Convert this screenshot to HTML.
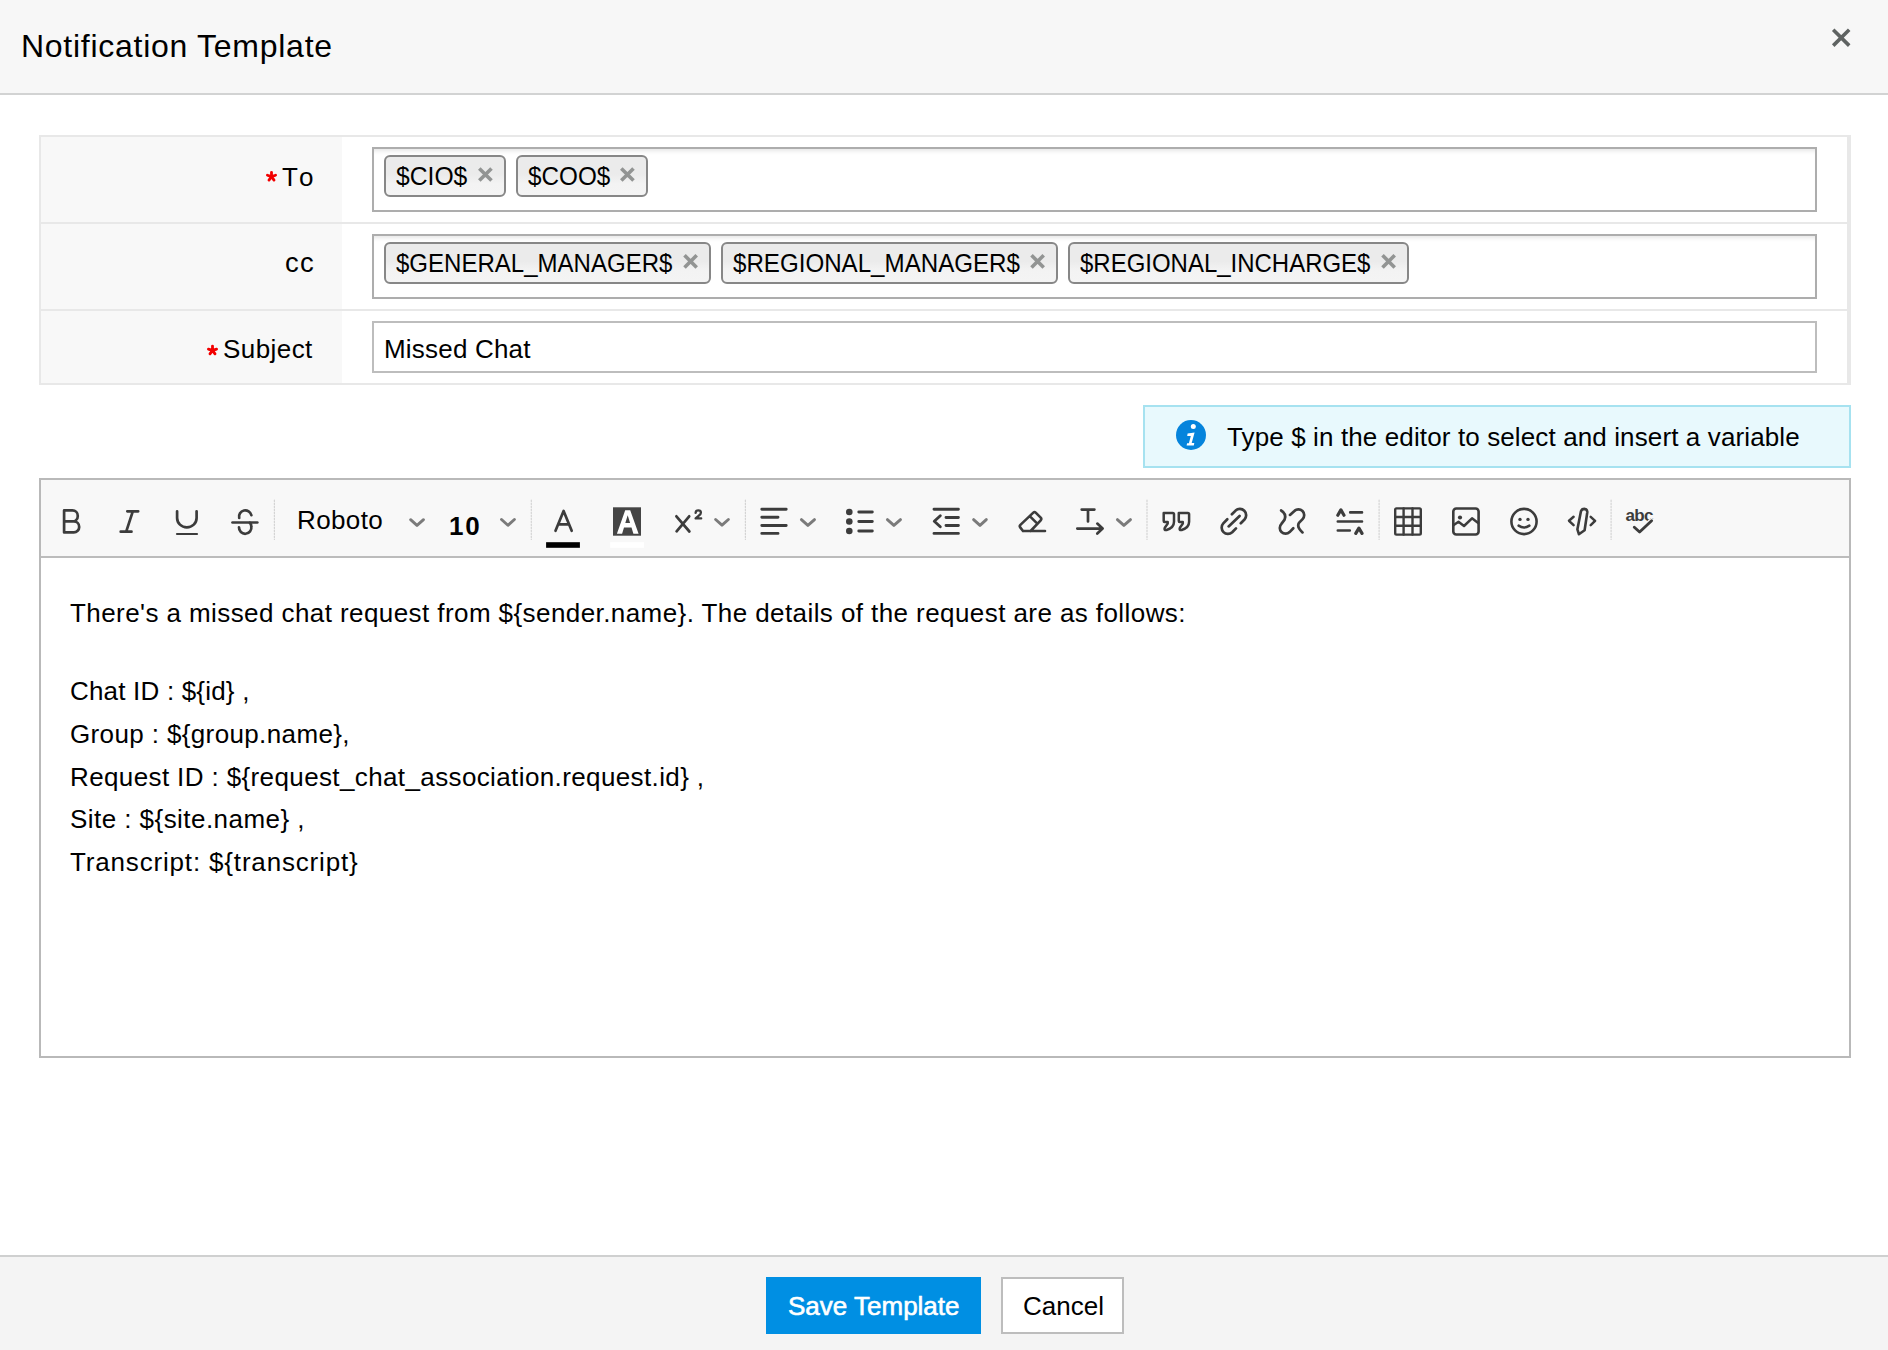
<!DOCTYPE html>
<html>
<head>
<meta charset="utf-8">
<style>
*{box-sizing:border-box;margin:0;padding:0}
html,body{width:1888px;height:1350px;overflow:hidden;background:#fff}
body{font-family:"Liberation Sans",sans-serif;color:#000;position:relative}
.abs{position:absolute}
.t{position:absolute;white-space:pre;line-height:1;font-size:26px}
#hdr{left:0;top:0;width:1888px;height:95px;background:#f7f7f7;border-bottom:2px solid #d2d3d3}
#tbl{left:39px;top:135px;width:1812px;height:250px;border:2px solid #e8e8e8;border-right-width:4px;background:#fff}
.lab{position:absolute;left:0;width:301px;background:#f8f8f8}
.div{position:absolute;left:0;right:0;height:2px;background:#e8e8e8}
.inp{position:absolute;left:331px;width:1445px;border:2px solid #adadad;background:#fff}
.inp.sh{box-shadow:inset 0 5px 4px -3px #e6e6e6}
.tag{position:absolute;height:42px;border:2px solid #878787;border-radius:6px;background:linear-gradient(#ebebeb,#ebebeb 45%,#f3f3f3 70%,#f4f4f4)}
.red{color:#e00}
#info{left:1143px;top:405px;width:708px;height:63px;border:2px solid #a6e2f0;background:#e8f9fd}
#ed{left:39px;top:478px;width:1812px;height:580px;border:2px solid #b9b9b9;background:#fff}
#tb{position:absolute;left:0;top:0;width:100%;height:78px;background:#f8f8f8;border-bottom:2px solid #bcbcbc}
#ftr{left:0;top:1255px;width:1888px;height:95px;background:#f4f4f4;border-top:2px solid #cfd0d0}
#save{left:766px;top:1277px;width:215px;height:57px;background:#008fe3}
#cancel{left:1001px;top:1277px;width:123px;height:57px;background:#fff;border:2px solid #bdbdbd}
.sep{position:absolute;top:500px;width:1px;height:40px;border-left:1px dotted #c8c8c8}
</style>
</head>
<body>
<div id="hdr" class="abs"></div>
<div class="t" id="x_title" style="letter-spacing:0.73px;left:21px;top:30px;font-size:32px">Notification Template</div>

<div id="tbl" class="abs">
  <div class="lab" style="top:0;height:85px"></div>
  <div class="div" style="top:85px"></div>
  <div class="lab" style="top:87px;height:85px"></div>
  <div class="div" style="top:172px"></div>
  <div class="lab" style="top:174px;height:72px"></div>
  <div class="inp sh" style="top:10px;height:65px"></div>
  <div class="inp sh" style="top:97px;height:65px"></div>
  <div class="inp" style="top:184px;height:52px;border-color:#bdbdbd"></div>
</div>

<div class="tag" style="left:384px;top:155px;width:122px"></div>
<div class="tag" style="left:516px;top:155px;width:132px"></div>
<div class="tag" style="left:384px;top:242px;width:327px"></div>
<div class="tag" style="left:721px;top:242px;width:337px"></div>
<div class="tag" style="left:1068px;top:242px;width:341px"></div>

<div id="info" class="abs"></div>
<div id="ed" class="abs"><div id="tb"></div></div>
<div id="ftr" class="abs"></div>
<div id="save" class="abs"></div>
<div id="cancel" class="abs"></div>

<div class="t" id="x_to" style="font-kerning:none;letter-spacing:1px;left:282px;top:164px">To</div>
<div class="t" id="x_cc" style="font-size:27.5px;letter-spacing:1.2px;left:285px;top:249px">cc</div>
<div class="t" id="x_subj" style="letter-spacing:0.43px;left:223px;top:336px">Subject</div>
<div class="t" id="x_t1" style="transform:scaleX(0.949);transform-origin:0 0;left:396px;top:163px">$CIO$</div>
<div class="t" id="x_t2" style="transform:scaleX(0.933);transform-origin:0 0;left:528px;top:163px">$COO$</div>
<div class="t" id="x_t3" style="transform:scaleX(0.924);transform-origin:0 0;left:396px;top:250px">$GENERAL_MANAGER$</div>
<div class="t" id="x_t4" style="transform:scaleX(0.928);transform-origin:0 0;left:733px;top:250px">$REGIONAL_MANAGER$</div>
<div class="t" id="x_t5" style="transform:scaleX(0.922);transform-origin:0 0;left:1080px;top:250px">$REGIONAL_INCHARGE$</div>
<div class="t" id="x_ms" style="letter-spacing:0.2px;left:384px;top:336px">Missed Chat</div>
<div class="t" id="x_info" style="letter-spacing:0.12px;left:1227px;top:424px">Type $ in the editor to select and insert a variable</div>
<div class="t" id="x_rob" style="letter-spacing:0.38px;left:297px;top:507px">Roboto</div>
<div class="t" id="x_10" style="letter-spacing:1.7px;left:449px;top:513px;font-weight:bold">10</div>
<div class="t" id="x_l1" style="letter-spacing:0.42px;left:70px;top:600px">There's a missed chat request from ${sender.name}. The details of the request are as follows:</div>
<div class="t" id="x_l2" style="letter-spacing:0.19px;left:70px;top:678px">Chat ID : ${id} ,</div>
<div class="t" id="x_l3" style="letter-spacing:0.37px;left:70px;top:721px">Group : ${group.name},</div>
<div class="t" id="x_l4" style="letter-spacing:0.38px;left:70px;top:764px">Request ID : ${request_chat_association.request.id} ,</div>
<div class="t" id="x_l5" style="letter-spacing:0.45px;left:70px;top:806px">Site : ${site.name} ,</div>
<div class="t" id="x_l6" style="letter-spacing:0.83px;left:70px;top:849px">Transcript: ${transcript}</div>
<div class="t" id="x_save" style="-webkit-text-stroke:0.6px #fff;left:788px;top:1293px;color:#fff">Save Template</div>
<div class="t" id="x_cancel" style="left:1023px;top:1293px">Cancel</div>

<svg id="ov" width="1888" height="1350" style="position:absolute;left:0;top:0">
<g fill="none" stroke-linecap="round" stroke-linejoin="round">
 <!-- close -->
 <path d="M1833.2,29.8 L1849.2,45.6 M1849.2,29.8 L1833.2,45.6" stroke="#5f6362" stroke-width="3.6" stroke-linecap="butt"/>
 <!-- tag x -->
 <g stroke="#929493" stroke-width="3.6" stroke-linecap="butt">
  <path d="M479.3,168.4 L491.5,180.6 M491.5,168.4 L479.3,180.6"/>
  <path d="M621.3,168.4 L633.5,180.6 M633.5,168.4 L621.3,180.6"/>
  <path d="M684.5,255.3 L696.7,267.5 M696.7,255.3 L684.5,267.5"/>
  <path d="M1031.5,255.3 L1043.7,267.5 M1043.7,255.3 L1031.5,267.5"/>
  <path d="M1382.5,255.3 L1394.7,267.5 M1394.7,255.3 L1382.5,267.5"/>
 </g>
 <g stroke="#3c3c3c" stroke-width="2.7">
  <!-- B -->
  <path d="M64.1,510.4 V532.4 H73.8 A5.4,5.5 0 0 0 73.8,521.4 H64.1 M64.1,510.4 H72.4 A5.4,5.5 0 0 1 72.4,521.4"/>
  <!-- I -->
  <path d="M127.3,511.3 H138.2 M120.7,531.7 H131.5 M132.8,511.3 L126.2,531.7"/>
  <!-- U -->
  <path d="M177.1,511.3 V518 A9.75,9.4 0 0 0 196.6,518 V511.3"/>
  <path d="M177,534 H197" stroke-width="2.2"/>
  <!-- S strike -->
  <path d="M239.2,518 A6.2,6.2 0 1 1 251.4,515.2"/>
  <path d="M232.5,522.5 H257.3"/>
  <path d="M239,527.3 A6.2,6.2 0 1 0 251.3,526.5 Q251.3,524.2 249.8,522.8"/>
  <!-- A font color -->
  <path d="M555.5,530.8 L563.6,511 L571.7,530.8 M559.3,524.4 H568"/>
  <!-- X2 -->
  <path d="M676.4,516.3 L689.4,531.5 M689.2,516.3 L676.6,531.3"/>
  <path d="M695.6,512.8 Q695.8,510.4 698.3,510.4 Q700.9,510.4 700.9,512.7 Q700.9,514.3 698.6,515.8 L695.6,518.4 H701.2" stroke-width="2.3"/>
  <!-- align -->
  <path d="M761.8,509.3 H786.2 M761.8,517.2 H778 M761.8,525.5 H786.2 M761.8,533.4 H778" stroke-width="2.9"/>
  <!-- list -->
  <path d="M858.8,512 H872.3 M858.8,521.5 H872.3 M858.8,531 H872.3" stroke-width="2.9"/>
  <!-- outdent -->
  <path d="M934,509.3 H958.4 M946,517.5 H958.4 M946,525.5 H958.4 M934,533.4 H958.4" stroke-width="2.9"/>
  <path d="M940.3,515.8 L934.3,521.3 L940.3,526.8" stroke-width="2.9"/>
  <!-- eraser -->
  <path d="M1023,531 L1020.2,527.4 Q1019.2,526.1 1020.4,524.9 L1033.3,512.6 Q1034.5,511.5 1035.7,512.6 L1040.7,517.7 Q1041.9,519 1040.7,520.3 L1030.6,531 M1023,531 H1045 M1030.5,516.8 L1037.3,523.6" stroke-width="2.6"/>
  <!-- T arrow -->
  <path d="M1081.7,509.6 H1094.4 M1088,509.6 V521.5 M1077.3,528.6 H1102.6 M1097.3,523.6 L1102.6,528.6 L1097.3,533.6" stroke-width="2.7"/>
  <!-- quote -->
  <path d="M1163.7,512.9 H1172.7 Q1174,512.9 1174,514.2 V521.8 Q1174,527.8 1166.6,530 Q1163.7,530.3 1164.8,527.8 L1167.7,523.6 V522 H1164.6 Q1163.7,522 1163.7,521 Z" stroke-width="2.5"/>
  <path d="M1178.8,512.9 H1187.8 Q1189.1,512.9 1189.1,514.2 V521.8 Q1189.1,527.8 1181.7,530 Q1178.8,530.3 1179.9,527.8 L1182.8,523.6 V522 H1179.7 Q1178.8,522 1178.8,521 Z" stroke-width="2.5"/>
  <!-- link -->
  <path d="M1231.9,514.3 L1235.6,510.6 A6.3,6.3 0 0 1 1244.5,519.5 L1240.8,523.2"/>
  <path d="M1227.3,519.3 L1223.3,523.4 A6.3,6.3 0 0 0 1232.2,532.3 L1236,528.4"/>
  <path d="M1228.6,526.4 L1239.6,515.9"/>
  <!-- unlink -->
  <path d="M1281.1,510.5 Q1286.8,513.8 1284.6,519.6 L1281.4,523.9 A5.8,5.8 0 0 0 1289.6,532.1 L1293.3,528.3"/>
  <path d="M1290,514.9 L1294.4,510.9 A5.8,5.8 0 0 1 1302.6,519.1 L1299.2,522.6 Q1296.2,527 1302.5,532.4"/>
  <!-- line height -->
  <path d="M1350.2,512.4 H1362 M1337.8,521.5 H1362 M1337.8,530.5 H1349.8" stroke-width="2.6"/><path d="M1337.8,515.2 L1340.9,509.9 L1344,515.2 M1355.8,533.4 L1358.9,528.1 L1362,533.4" stroke-width="3.2"/>
  <!-- table -->
  <rect x="1395.2" y="508.4" width="25.6" height="26.2" rx="1.3" stroke-width="2.4"/>
  <path d="M1403.6,508.4 V534.6 M1412.5,508.4 V534.6 M1395.2,517 H1420.8 M1395.2,525.8 H1420.8" stroke-width="2.4"/>
  <!-- image -->
  <rect x="1453.3" y="508.5" width="25.3" height="26" rx="3" stroke-width="2.6"/>
  <path d="M1453.8,525 L1458.5,521.8 L1464,526 L1472,518.3 L1478.2,523" stroke-width="2.5"/>
  <!-- smiley -->
  <circle cx="1524" cy="521.5" r="12.6" stroke-width="2.6"/>
  <path d="M1518.6,525.6 Q1524,529.3 1529.4,525.6" stroke-width="2.5"/>
  <!-- code -->
  <path d="M1573.6,516.8 L1569,520.8 L1573.6,525.2 M1590.7,516.8 L1595.1,520.8 L1590.7,525.2" stroke-width="2.5"/>
  <path d="M1578.9,534.2 L1577.4,529.3 L1580.9,511.4 Q1581.6,508.9 1584.3,508.9 Q1587.5,509.2 1587.3,512.2 L1584.6,530.2 Z" stroke-width="2.6"/>
 </g>
 <!-- chevrons -->
 <g fill="none" stroke="#7b7b7b" stroke-width="2.9" stroke-linecap="round" stroke-linejoin="round">
  <path d="M410.6,519.7 L417,525.4 L423.5,519.7"/>
  <path d="M501.5,519.5 L507.9,525.3 L514.4,519.5"/>
  <path d="M715.6,519.5 L722,525.2 L728.4,519.5"/>
  <path d="M801.4,519.6 L807.9,525.4 L814.5,519.6"/>
  <path d="M887.4,519.6 L893.9,525.4 L900.5,519.6"/>
  <path d="M973.6,519.6 L980,525.4 L986.3,519.6"/>
  <path d="M1117.4,519.6 L1123.9,525.4 L1130.5,519.6"/>
 </g>
 <!-- separators -->
 <g stroke="#d4d4d4" stroke-width="1.2" stroke-dasharray="1.5,1.5">
  <path d="M274.4,500 V539.5 M531.3,500 V539.5 M745.4,500 V539.5 M1147,500 V539.5 M1379.1,500 V539.5 M1611.1,500 V539.5"/>
 </g>
 <g fill="#3c3c3c" stroke="none">
  <circle cx="849.3" cy="512" r="3.3"/>
  <circle cx="849.3" cy="521.5" r="3.3"/>
  <circle cx="849.3" cy="531" r="3.3"/>
  <circle cx="1460" cy="517.5" r="2.1"/>
  <circle cx="1520" cy="519.4" r="1.7"/>
  <circle cx="1528" cy="519.4" r="1.7"/>
 </g>
 <!-- A bg color -->
 <rect x="613" y="507.3" width="28" height="28.4" fill="#454545"/>
 <path d="M616.9,533.7 L625.2,510.2 H630.2 L638.6,533.7 H633.4 L631.5,527.4 H624 L622.1,533.7 Z M625.3,523 H630.1 L627.7,515.3 Z" fill="#fff" fill-rule="evenodd"/>
 <rect x="610.2" y="542.2" width="33.8" height="5.6" fill="#fff"/>
 <rect x="546.1" y="542.2" width="33.8" height="5.6" fill="#000"/>
 <g stroke="#f20000" stroke-width="2.8">
  <path d="M271.5,176.6 L271.50,172.30 M271.5,176.6 L275.59,175.27 M271.5,176.6 L274.03,180.08 M271.5,176.6 L268.97,180.08 M271.5,176.6 L267.41,175.27 "/>
  <path d="M212.5,350.4 L212.50,346.10 M212.5,350.4 L216.59,349.07 M212.5,350.4 L215.03,353.88 M212.5,350.4 L209.97,353.88 M212.5,350.4 L208.41,349.07 "/>
 </g>
 <!-- info icon -->
 <circle cx="1191" cy="435" r="15" fill="#0584dc"/>
 <circle cx="1193.3" cy="426.6" r="2.5" fill="#fff"/>
 <path d="M1187.6,433.4 L1194.6,432.6 L1191.7,443 H1194.3 L1193.8,445.4 H1186.6 L1187.1,443.2 H1188.9 L1190.8,435.9 H1187.2 Z" fill="#fff"/>
<text x="1625.6" y="520.8" font-family="Liberation Sans" font-size="17" font-weight="bold" fill="#3c3c3c" letter-spacing="-0.7">abc</text>
 <path d="M1634.3,527.2 L1639.6,532 L1651.6,520.8" fill="none" stroke="#f8f8f8" stroke-width="5.5" stroke-linecap="round" stroke-linejoin="round"/>
 <path d="M1634.3,527.2 L1639.6,532 L1651.6,520.8" fill="none" stroke="#3c3c3c" stroke-width="2.9" stroke-linecap="round" stroke-linejoin="round"/>
</svg>
</body>
</html>
